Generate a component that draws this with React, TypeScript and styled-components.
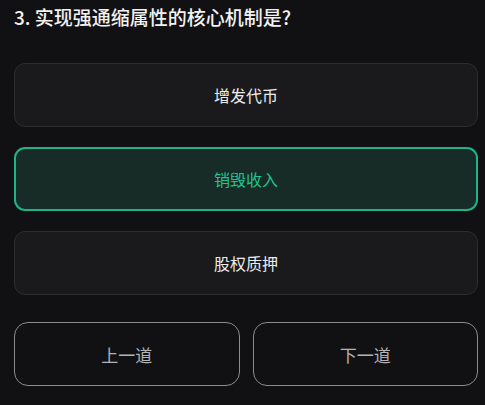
import React, {useState} from 'react';
import styled, {createGlobalStyle} from 'styled-components';

const GlobalStyle = createGlobalStyle`
  html, body {
    margin: 0;
    padding: 0;
    background: #111114;
  }
  body {
    font-family: "Noto Sans CJK SC", "Noto Sans", sans-serif;
  }
`;

const Page = styled.div`
  width: 485px;
  height: 405px;
  box-sizing: border-box;
  padding: 4px 7px 0 14px;
  background: #111114;
  display: flex;
  flex-direction: column;
`;

const Title = styled.h2`
  margin: 0;
  font-size: 19px;
  line-height: 26px;
  font-weight: 500;
  color: #f2f2f2;
`;

const OptionList = styled.div`
  margin-top: 33px;
  display: flex;
  flex-direction: column;
  gap: 20px;
`;

const Option = styled.button<{ $selected: boolean }>`
  height: 64px;
  box-sizing: border-box;
  border-radius: 11px;
  border: ${p => p.$selected ? '2px solid #1fb488' : '1px solid #2c2c2f'};
  background: ${p => p.$selected ? '#172c27' : '#1a1a1c'};
  color: ${p => p.$selected ? '#22c492' : '#ececec'};
  font-family: inherit;
  font-size: 16px;
  cursor: pointer;
`;

const NavRow = styled.div`
  margin-top: 27px;
  display: grid;
  grid-template-columns: 1fr 1fr;
  gap: 13px;
`;

const NavButton = styled.button`
  height: 64px;
  box-sizing: border-box;
  border-radius: 14px;
  border: 1.5px solid #8c8c8e;
  background: transparent;
  color: #b4b4b6;
  font-family: inherit;
  font-size: 17px;
  cursor: pointer;
`;

const options = ['增发代币', '销毁收入', '股权质押'];

export default function App() {
    const [selected, setSelected] = useState(1);
    return (
        <Page>
            <GlobalStyle/>
            <Title>3. 实现强通缩属性的核心机制是?</Title>
            <OptionList>
                {options.map((text, i) =>
                    <Option key={text} $selected={i === selected} onClick={() => setSelected(i)}>{text}</Option>
                )}
            </OptionList>
            <NavRow>
                <NavButton>上一道</NavButton>
                <NavButton>下一道</NavButton>
            </NavRow>
        </Page>
    );
}
